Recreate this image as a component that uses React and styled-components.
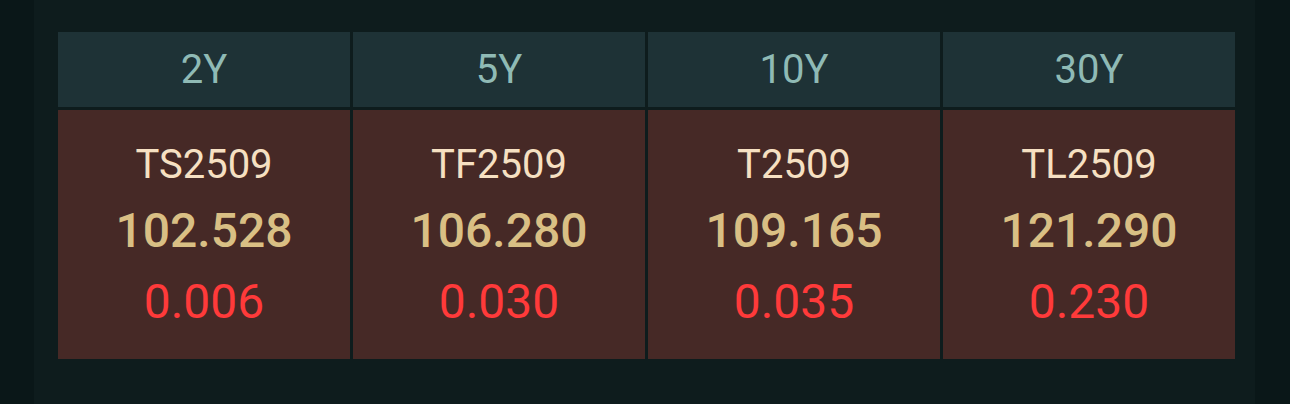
import React from "react";
import styled, { createGlobalStyle } from "styled-components";

const Global = createGlobalStyle`
  html, body { margin: 0; padding: 0; background: #0a1718; }
  body { font-family: Roboto, "Noto Sans", "Liberation Sans", sans-serif; }
`;

const Page = styled.div`
  display: flex;
  justify-content: flex-start;
  min-height: 404px;
  padding-left: 34px;
  box-sizing: border-box;
`;

const Panel = styled.div`
  width: 1221px;
  min-height: 404px;
  background: #0e1c1d;
  box-sizing: border-box;
  padding: 32px 20px 0 24px;
`;

const Grid = styled.div`
  display: grid;
  grid-template-columns: repeat(4, 292px);
  grid-template-rows: 75px 249px;
  gap: 3px;
`;

const HeaderCell = styled.div`
  background: #1e3236;
  display: flex;
  align-items: center;
  justify-content: center;
  color: #8fbab5;
  font-size: 40px;
  line-height: 1;
`;

const BodyCell = styled.div`
  background: #462926;
  display: flex;
  flex-direction: column;
  align-items: center;
  padding-top: 24px;
  box-sizing: border-box;
`;

const Code = styled.div`
  color: #f6e0c2;
  font-size: 40px;
  line-height: 62px;
`;

const Price = styled.div`
  color: #d9bf84;
  font-size: 48px;
  font-weight: 500;
  line-height: 70px;
`;

const Change = styled.div`
  color: ${(p) => (p.$up ? "#ff3a3a" : "#2ecc71")};
  font-size: 48px;
  line-height: 72px;
`;

const data = [
  { tenor: "2Y", code: "TS2509", price: "102.528", change: "0.006" },
  { tenor: "5Y", code: "TF2509", price: "106.280", change: "0.030" },
  { tenor: "10Y", code: "T2509", price: "109.165", change: "0.035" },
  { tenor: "30Y", code: "TL2509", price: "121.290", change: "0.230" },
];

export default function App() {
  return (
    <>
      <Global />
      <Page>
        <Panel>
          <Grid>
            {data.map((d) => (
              <HeaderCell key={d.tenor}>{d.tenor}</HeaderCell>
            ))}
            {data.map((d) => (
              <BodyCell key={d.code}>
                <Code>{d.code}</Code>
                <Price>{d.price}</Price>
                <Change $up>{d.change}</Change>
              </BodyCell>
            ))}
          </Grid>
        </Panel>
      </Page>
    </>
  );
}
